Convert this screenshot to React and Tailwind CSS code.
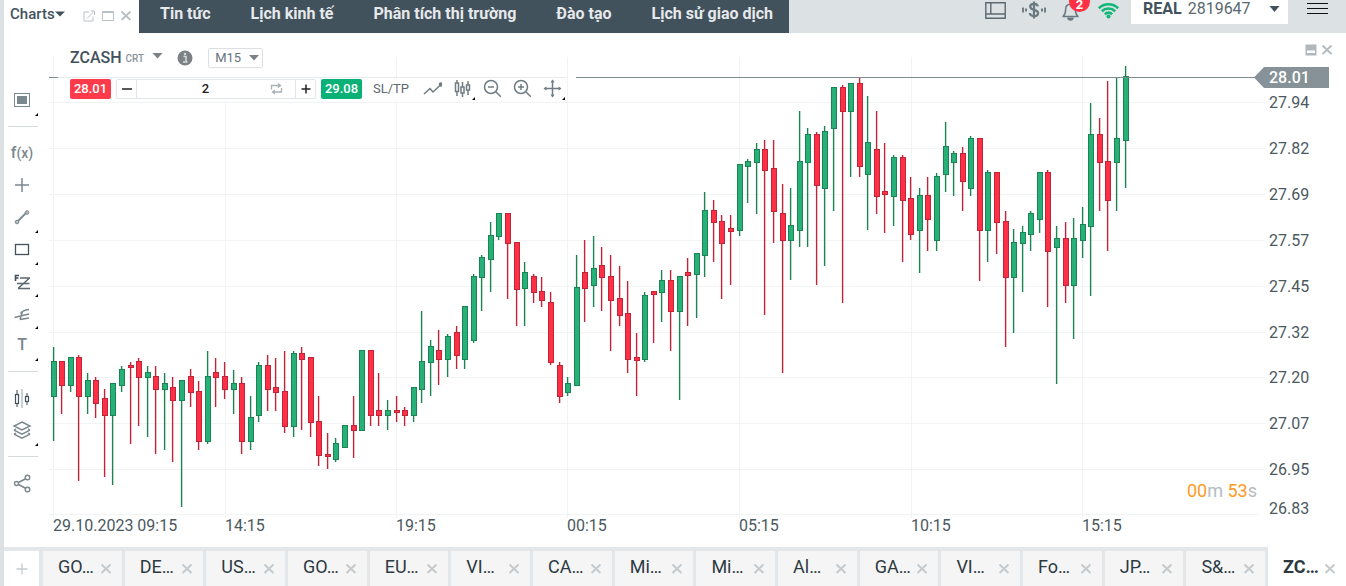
import React, { useState } from "react";

const navLinks = [
  "Tin tức",
  "Lịch kinh tế",
  "Phân tích thị trường",
  "Đào tạo",
  "Lịch sử giao dịch",
];

const symbolTabs = [
  "GO…", "DE…", "US…", "GO…", "EU…", "VI…", "CA…", "Mi…",
  "Mi…", "Al…", "GA…", "VI…", "Fo…", "JP…", "S&…",
];

const priceLabels = [
  { label: "27.94", y: 102 },
  { label: "27.82", y: 148 },
  { label: "27.69", y: 194 },
  { label: "27.57", y: 240 },
  { label: "27.45", y: 286 },
  { label: "27.32", y: 332 },
  { label: "27.20", y: 377 },
  { label: "27.07", y: 423 },
  { label: "26.95", y: 469 },
];

const timeLabels = [
  { label: "29.10.2023 09:15", x: 53 },
  { label: "14:15", x: 225 },
  { label: "19:15", x: 396 },
  { label: "00:15", x: 567 },
  { label: "05:15", x: 739 },
  { label: "10:15", x: 911 },
  { label: "15:15", x: 1082 },
];

// [up, wick top, body top, body bottom, wick bottom]
const candles = [
  [1, 347, 361, 397, 441], [0, 361, 361, 386, 414], [1, 357, 357, 386, 392],
  [0, 355, 357, 397, 481], [1, 373, 380, 397, 414], [0, 377, 380, 404, 418],
  [0, 389, 398, 416, 477], [1, 383, 383, 416, 485], [1, 366, 369, 386, 392],
  [0, 362, 365, 368, 444], [0, 358, 361, 378, 426], [1, 366, 372, 378, 437],
  [0, 366, 376, 390, 454], [1, 373, 383, 390, 450], [0, 377, 387, 401, 462],
  [1, 380, 380, 401, 507], [0, 369, 376, 393, 407], [0, 381, 391, 442, 450],
  [1, 351, 376, 442, 444], [0, 358, 372, 378, 407], [0, 362, 376, 390, 399],
  [1, 370, 383, 390, 414], [0, 377, 383, 442, 454], [1, 396, 417, 442, 450],
  [1, 362, 365, 416, 422], [0, 355, 365, 390, 411], [0, 358, 387, 393, 411],
  [0, 351, 391, 427, 433], [1, 351, 353, 427, 437], [0, 347, 353, 360, 430],
  [0, 357, 357, 423, 437], [0, 396, 421, 456, 466], [0, 433, 454, 457, 469],
  [1, 438, 443, 460, 462], [1, 425, 425, 448, 448], [0, 396, 425, 431, 458],
  [1, 350, 350, 431, 431], [0, 350, 350, 416, 426], [0, 373, 410, 416, 426],
  [1, 400, 410, 416, 430], [0, 396, 410, 413, 422], [0, 407, 410, 416, 426],
  [1, 387, 387, 416, 422], [1, 311, 361, 390, 403], [1, 340, 346, 363, 396],
  [0, 330, 350, 360, 385], [1, 334, 336, 360, 377], [0, 326, 332, 356, 369],
  [1, 306, 306, 360, 369], [1, 274, 276, 341, 343], [1, 255, 257, 278, 311],
  [1, 222, 235, 260, 292], [1, 213, 213, 237, 240], [0, 213, 213, 244, 299],
  [0, 242, 242, 290, 326], [1, 262, 272, 289, 326], [0, 274, 276, 293, 303],
  [0, 277, 291, 301, 307], [0, 292, 302, 363, 365], [0, 362, 365, 397, 403],
  [1, 377, 383, 393, 396], [1, 255, 287, 386, 386], [0, 240, 272, 289, 322],
  [1, 236, 268, 286, 307], [0, 247, 265, 278, 311], [0, 255, 276, 301, 351],
  [0, 266, 298, 316, 326], [0, 281, 313, 360, 373], [0, 333, 357, 361, 396],
  [1, 292, 295, 360, 362], [0, 291, 291, 295, 343], [1, 270, 280, 293, 322],
  [0, 270, 280, 312, 351], [1, 276, 276, 312, 400], [0, 258, 272, 276, 326],
  [1, 253, 253, 275, 318], [1, 192, 210, 256, 277], [0, 200, 210, 223, 262],
  [0, 215, 221, 244, 299], [0, 215, 228, 232, 285], [1, 164, 164, 231, 236],
  [1, 159, 161, 167, 203], [1, 143, 149, 163, 214], [0, 140, 149, 171, 315],
  [0, 140, 168, 212, 243], [0, 184, 213, 241, 373], [1, 188, 225, 241, 280],
  [1, 111, 161, 231, 247], [1, 128, 134, 163, 247], [0, 132, 134, 186, 285],
  [1, 126, 131, 189, 266], [1, 87, 87, 129, 211], [0, 85, 87, 112, 303],
  [1, 83, 83, 112, 177], [0, 78, 83, 167, 177], [1, 96, 142, 175, 230],
  [0, 111, 149, 197, 214], [0, 143, 191, 195, 233], [1, 155, 157, 197, 226],
  [0, 155, 157, 201, 262], [0, 177, 198, 235, 240], [1, 188, 195, 231, 273],
  [0, 177, 195, 220, 251], [1, 173, 176, 241, 251], [1, 122, 146, 175, 192],
  [1, 151, 153, 163, 196], [0, 147, 153, 182, 211], [1, 136, 138, 189, 196],
  [0, 138, 138, 231, 281], [1, 170, 172, 231, 262], [0, 172, 172, 223, 254],
  [0, 211, 221, 278, 347], [1, 229, 242, 278, 333], [1, 226, 232, 244, 292],
  [1, 211, 213, 235, 251], [1, 172, 172, 220, 233], [0, 170, 172, 252, 307],
  [1, 226, 238, 248, 384], [0, 222, 238, 286, 303], [1, 218, 238, 286, 339],
  [1, 207, 224, 241, 258], [1, 103, 134, 227, 296], [0, 118, 134, 163, 211],
  [0, 81, 161, 201, 251], [1, 78, 138, 163, 211], [1, 66, 76, 141, 188],
];

const App = () => {
  return (
    <div className="flex flex-col min-h-screen bg-white font-[Roboto,sans-serif] text-[#42525c]">
      <Header />
      <main className="flex flex-1 border-l-4 border-[#dce1e4]">
        <DrawingTools />
        <section className="relative flex-1 min-w-0">
          <Chart />
          <ChartToolbar />
          <div className="absolute top-[11px] right-[13px] flex items-center gap-1 text-[#b4bcc0]">
            <button aria-label="Minimize chart">
              <svg className="block" width="12" height="12" viewBox="0 0 12 12">
                <rect x="0.5" y="0.5" width="11" height="11" fill="#b0b8bd" />
                <rect x="2" y="6.5" width="8" height="2.5" fill="#fff" />
              </svg>
            </button>
            <button aria-label="Close chart">
              <CloseIcon />
            </button>
          </div>
        </section>
      </main>
      <SymbolTabs />
    </div>
  );
};

const Header = () => {
  return (
    <header className="flex h-[33px] bg-[#dce1e4] pl-1">
      <div className="flex items-center w-[135px] pl-[6px] pb-[5px] bg-white">
        <button className="flex items-center text-[15px] font-medium leading-5">
          Charts
          <svg width="10" height="6" viewBox="0 0 10 6">
            <path d="M0 0.5h10L5 5.5z" fill="currentColor" />
          </svg>
        </button>
        <div className="flex items-center gap-[6px] pl-[18px] pt-1 text-[#b9c1c5]">
          <button aria-label="Detach">
            <svg className="block" width="13" height="12" viewBox="0 0 13 12" fill="none" stroke="currentColor">
              <path d="M6 2H1v9h9V6.500M4 8.500L10.500 2M7.500 1h4v4" />
            </svg>
          </button>
          <button aria-label="Maximize">
            <svg className="block" width="12" height="12" viewBox="0 0 12 12" fill="none" stroke="currentColor">
              <path d="M0.500 1.500h11v9h-11zM0.500 2.500h11" />
            </svg>
          </button>
          <button aria-label="Close">
            <CloseIcon />
          </button>
        </div>
      </div>

      <nav className="flex items-center gap-10 pl-[21px] pr-4 pb-[5px] bg-[#42525c] text-[#e6e9eb] text-base font-bold whitespace-nowrap">
        {navLinks.map((link) => (
          <a href="#" key={link}>
            {link}
          </a>
        ))}
      </nav>

      <div className="flex flex-1 items-start justify-end">
        <div className="flex items-start gap-4 pr-3">
          <button aria-label="Layout" className="pt-[2px]">
            <svg className="block" width="21" height="17" viewBox="0 0 21 17" fill="none" stroke="#5b6970" strokeWidth="1.400">
              <path d="M0.800 0.800h19.400v15.400H0.800zM5.800 0.800v11M0.800 12h19.400" />
            </svg>
          </button>
          <button aria-label="Deposit" className="pt-[1px]">
            <svg className="block" width="24" height="18" viewBox="0 0 24 18" fill="none" stroke="#6b7980" strokeWidth="1.400">
              <path d="M12 0.500v17M15.800 5.400C15.500 3.700 14 2.900 12 2.900c-2.200 0-3.800 1-3.800 2.900 0 4.100 7.900 2.100 7.900 6.200 0 2-1.800 3.100-4.100 3.100-2.400 0-4-1.100-4.200-3.100" strokeWidth="2.200" />
              <path d="M1 6.500v5M4 7.500v3M20 7.500v3M23 6.500v5" strokeWidth="1.900" />
            </svg>
          </button>
          <button aria-label="Notifications" className="relative pt-[2px]">
            <svg className="block" width="17" height="19" viewBox="0 0 17 19" fill="none" stroke="#6b7980" strokeWidth="1.500">
              <path d="M1 14.500c2.200-1.800 2.600-3.500 2.600-6.700 0-3.300 1.700-5.600 4.900-5.600s4.900 2.300 4.900 5.600c0 3.200.4 4.900 2.600 6.700z" strokeLinejoin="round" />
              <path d="M6 16.200c.3 2.300 4.700 2.300 5 0z" fill="#6b7980" />
            </svg>
            <span className="absolute -top-[9px] left-[7px] flex items-center justify-center size-[21px] rounded-full bg-[#ff2f44] text-white text-[13px] leading-[8px] font-bold pt-[6px]">
              2
            </span>
          </button>
          <svg className="mt-[2px] ml-[3px]" width="21" height="17" viewBox="0 0 21 17" fill="none" stroke="#12b878" strokeWidth="2.600">
            <path d="M0.800 6.200c5.400-5.300 14-5.300 19.400 0M3.800 9.300c3.800-3.700 9.600-3.700 13.400 0M6.800 12.300c2.200-2 5.200-2 7.400 0" />
            <circle cx="10.500" cy="14.400" r="2" fill="#12b878" stroke="none" />
          </svg>
        </div>
        <button className="flex items-center h-6 w-[157px] pl-3 pr-2 pb-[6px] bg-white text-base leading-5">
          <span className="font-bold">REAL</span>
          <span className="pl-[6px] text-[#5a6870]">2819647</span>
          <svg className="ml-auto" width="11" height="6" viewBox="0 0 11 6">
            <path d="M0.500 0h10L5.500 6z" fill="#42525c" />
          </svg>
        </button>
        <button aria-label="Menu" className="pt-[3px] pl-[19px] pr-[18px]">
          <svg className="block" width="21" height="12" viewBox="0 0 21 12" stroke="#111">
            <path d="M0 0.500h21M0 5.500h21M0 10.500h21" />
          </svg>
        </button>
      </div>
    </header>
  );
};

const DrawingTools = () => {
  return (
    <aside className="flex flex-col w-[41px] pt-[51px] text-[#7b888e]">
      <ToolButton label="Window" hasMenu>
        <rect x="4.500" y="5.500" width="15" height="13" stroke="#7b888e" />
        <rect x="7" y="8" width="10" height="8" fill="#7b888e" stroke="none" />
      </ToolButton>
      <Separator />
      <button className="h-8 w-9 text-base leading-8 font-medium">
        f<span className="text-sm">(x)</span>
      </button>
      <ToolButton label="Crosshair">
        <path d="M5 12h14M12 5v14" strokeWidth="1.500" />
      </ToolButton>
      <ToolButton label="Trend line" hasMenu>
        <path d="M7.500 16.500l9-9" strokeWidth="1.800" />
        <circle cx="7" cy="17" r="1.800" fill="#b4bcc0" />
        <circle cx="17" cy="7.500" r="1.800" fill="#b4bcc0" />
      </ToolButton>
      <ToolButton label="Rectangle" hasMenu>
        <rect x="5.500" y="7.500" width="13" height="10" stroke="#42525c" strokeWidth="1.300" />
      </ToolButton>
      <ToolButton label="Fibonacci" hasMenu>
        <path d="M5.500 12V6.500h3.500M5.500 9h3" strokeWidth="1.600" stroke="#42525c" />
        <path d="M10 9h10M7 14.500h12.500M8 19.500h12M19.500 9L8 19.500" strokeWidth="1.500" stroke="#5b6970" />
      </ToolButton>
      <ToolButton label="Pitchfork" hasMenu>
        <path d="M4.500 16.500l14.500-3.500M10 18.500l9-1.500M10.500 12.500c2-3 4.500-3.500 8.500-4M10 18.500l2.500-8" strokeWidth="1.400" />
      </ToolButton>
      <button className="relative h-8 w-9 text-base leading-8 font-medium">
        T
        <MenuTick />
      </button>
      <Separator />
      <ToolButton label="Chart type">
        <path d="M12 3v19" stroke="#9aa4a9" />
        <path d="M7 4v17M17 7v12" strokeWidth="1.500" />
        <rect x="5.500" y="8.500" width="3" height="9" fill="#fff" stroke="#42525c" strokeWidth="1.200" />
        <rect x="15.500" y="10.500" width="3" height="5" fill="#fff" stroke="#42525c" strokeWidth="1.200" />
      </ToolButton>
      <ToolButton label="Layers" hasMenu>
        <path d="M12 4l8 4-8 4-8-4zM4 12.200l8 4 8-4M4 16.200l8 4 8-4M4 12.200l2-1M20 12.200l-2-1M4 16.200l2-1M20 16.200l-2-1" strokeWidth="1.400" />
      </ToolButton>
      <Separator />
      <ToolButton label="Share">
        <path d="M17 7L6.500 12.500 17 18" strokeWidth="1.600" />
        <circle cx="6.500" cy="12.500" r="2" fill="#fff" strokeWidth="1.400" />
        <circle cx="17.500" cy="6.500" r="2.300" fill="#fff" strokeWidth="1.400" />
        <circle cx="17.500" cy="18.500" r="2.300" fill="#fff" strokeWidth="1.400" />
      </ToolButton>
    </aside>
  );
};

const ToolButton = ({ label, hasMenu, children }) => {
  return (
    <button aria-label={label} className="relative flex items-center justify-center h-8 w-9">
      <svg width="24" height="24" viewBox="0 0 24 24" fill="none" stroke="currentColor">
        {children}
      </svg>
      {hasMenu && <MenuTick />}
    </button>
  );
};

const MenuTick = () => (
  <svg className="absolute bottom-0 right-[2px]" width="3" height="3" viewBox="0 0 3 3">
    <path d="M3 0v3H0z" fill="#000" />
  </svg>
);

const Separator = () => <hr className="ml-1 my-[10px] w-[30px] border-[#d5dadc]" />;

const CloseIcon = () => (
  <svg className="block" width="12" height="12" viewBox="0 0 12 12" fill="none" stroke="currentColor" strokeWidth="1.900">
    <path d="M1.500 1.500l9 8.500M10.500 1.500l-9 8.500" />
  </svg>
);

const ChartToolbar = () => {
  const [timeframe, setTimeframe] = useState("M15");
  const [volume, setVolume] = useState("2");

  return (
    <div className="absolute top-3 left-[13px] flex flex-col items-start">
      <div className="flex items-center h-8 pl-3 pr-3 pb-[6px] bg-white">
        <button className="flex items-center">
          <span className="text-base font-medium">ZCASH</span>
          <span className="pl-1 text-[10px] font-medium text-[#8b9599]">CRT</span>
          <svg className="ml-2 -mt-1" width="11" height="6" viewBox="0 0 11 6">
            <path d="M0.500 0h10L5.500 5.500z" fill="#7b8184" />
          </svg>
        </button>
        <button aria-label="Info" className="ml-[14px]">
          <svg className="block" width="16" height="16" viewBox="0 0 16 16">
            <circle cx="8" cy="8" r="7.500" fill="#7b8184" />
            <path d="M6.500 6.500h2.500v5M6 12h4.500" stroke="#d8dbdc" strokeWidth="1.500" fill="none" />
            <circle cx="8" cy="4" r="1.200" fill="#d8dbdc" />
          </svg>
        </button>
        <div className="relative ml-[15px]">
          <select
            aria-label="Timeframe"
            value={timeframe}
            onChange={(e) => setTimeframe(e.target.value)}
            className="block appearance-none h-5 w-[55px] pl-[6px] border border-[#dce0e2] rounded-xs bg-white text-[13px] leading-4 text-[#67747b]"
          >
            <option>M1</option>
            <option>M5</option>
            <option>M15</option>
            <option>H1</option>
          </select>
          <svg className="absolute right-1 top-[7px] pointer-events-none" width="10" height="6" viewBox="0 0 10 6">
            <path d="M0 0h10L5 5.500z" fill="#7b8184" />
          </svg>
        </div>
      </div>

      <div className="flex items-center h-[23px] pl-3 border-t border-[#e6eaec] bg-white">
        <button className="h-5 w-[41px] rounded-xs bg-[#ff3b4b] text-white text-[13px] font-medium">
          28.01
        </button>
        <div className="flex items-center h-5 ml-[5px] mr-[5px] border border-[#e3e6e8] rounded-xs text-[#222]">
          <button aria-label="Decrease" className="flex items-center justify-center w-[19px]">
            <svg width="10" height="10" viewBox="0 0 10 10" stroke="currentColor" strokeWidth="1.500">
              <path d="M0 5h10" />
            </svg>
          </button>
          <input
            aria-label="Volume"
            value={volume}
            onChange={(e) => setVolume(e.target.value)}
            className="h-[18px] w-[138px] border-l border-[#e3e6e8] text-center text-[13px] font-medium"
          />
          <button aria-label="Switch volume unit" className="w-[21px]">
            <svg className="block -ml-1" width="13" height="12" viewBox="0 0 13 12" fill="none" stroke="#a9b1b5" strokeWidth="1.300">
              <path d="M1.500 6.500v-4h9M8 0.500l2.500 2L8 4.500M11.500 5v4h-9M5 7L2.500 9 5 11" />
            </svg>
          </button>
          <button
            aria-label="Increase"
            className="flex items-center justify-center h-[18px] w-5 border-l border-[#e3e6e8]"
          >
            <svg width="10" height="10" viewBox="0 0 10 10" stroke="currentColor" strokeWidth="1.500">
              <path d="M0.500 5h9M5 0.500v9" />
            </svg>
          </button>
        </div>
        <button className="h-5 w-[41px] rounded-xs bg-[#09b177] text-white text-[13px] font-medium">
          29.08
        </button>
        <button className="ml-[11px] mr-2 text-[13px] text-[#5b6970]">SL/TP</button>
        <div className="flex items-center text-[#6f7c83]">
          <BarButton label="Line chart">
            <path d="M1 15l6-5.500 3 3.500 8-7.500" />
            <circle cx="18" cy="5.500" r="1.500" fill="currentColor" />
          </BarButton>
          <BarButton label="Candles" hasMenu>
            <path d="M4 1v16M9.500 3v15M15 2v14" />
            <rect x="2.500" y="4" width="3" height="8.500" fill="#fff" />
            <rect x="8" y="8" width="3" height="6" fill="#fff" />
            <rect x="13.500" y="6" width="3" height="5" fill="#fff" />
          </BarButton>
          <BarButton label="Zoom out">
            <circle cx="8" cy="8" r="6.500" />
            <path d="M5 8h6M12.800 12.800l5 5" />
          </BarButton>
          <BarButton label="Zoom in">
            <circle cx="8" cy="8" r="6.500" />
            <path d="M5 8h6M8 5v6M12.800 12.800l5 5" />
          </BarButton>
          <BarButton label="Move" hasMenu>
            <path d="M1.500 9.500h16M9.500 1.500v16" />
            <path d="M0.500 9.500l3-2v4zM18.500 9.500l-3-2v4zM9.500 0.500l-2 3h4zM9.500 18.500l-2-3h4z" fill="currentColor" stroke="none" />
          </BarButton>
        </div>
      </div>
    </div>
  );
};

const BarButton = ({ label, hasMenu, children }) => {
  return (
    <button aria-label={label} className="relative flex items-center justify-center h-[22px] w-[30px] pb-[2px]">
      <svg width="19" height="19" viewBox="0 0 19 19" fill="none" stroke="currentColor" strokeWidth="1.500">
        {children}
      </svg>
      {hasMenu && <MenuTick />}
    </button>
  );
};

const Chart = () => {
  return (
    <svg className="block w-full h-auto" viewBox="45 33 1301 514" fontFamily="Roboto, sans-serif">
      <g stroke="#f1f4f5" shapeRendering="crispEdges">
        {priceLabels.map(({ y }) => (
          <line key={y} x1="49" x2="1265" y1={y + 0.5} y2={y + 0.5} />
        ))}
        <line x1="49" x2="1258" y1="514.5" y2="514.5" />
        {timeLabels.map(({ x }) => (
          <line key={x} x1={x + 0.5} x2={x + 0.5} y1="57" y2="518" />
        ))}
      </g>

      {candles.map(([up, high, top, bottom, low], i) => {
        const x = Math.floor(50.9 + i * 8.578) + (i === 0 ? 1 : 0);
        return (
          <g key={i} fill={up ? "#27b078" : "#ff2f45"} stroke={up ? "#1b8452" : "#bf2438"}>
            <line x1={x + 2.6} x2={x + 2.6} y1={high} y2={low} strokeWidth="1.400" />
            <rect x={x + 0.5} y={top + 0.5} width="5" height={Math.max(bottom - top - 1, 2)} />
          </g>
        );
      })}

      <path d="M49 77.500h9M576 77.500h682" stroke="#7f8c92" />
      <path d="M1254 77.500l10-10.500h65v21h-65z" fill="#869297" />
      <text x="1269" y="83" fontSize="16" fontWeight="500" fill="#fff">
        28.01
      </text>

      <g fontSize="16" fill="#4b5960">
        {priceLabels.map(({ label, y }) => (
          <text key={label} x="1269" y={y + 6}>
            {label}
          </text>
        ))}
        <text x="1269" y="514">26.83</text>
        {timeLabels.map(({ label, x }) => (
          <text key={label} x={x} y="531">
            {label}
          </text>
        ))}
      </g>

      <text x="1187" y="497" fontSize="18" fill="#b4bcc0">
        <tspan fill="#ff9a1f">00</tspan>m <tspan fill="#ff9a1f">53</tspan>s
      </text>
    </svg>
  );
};

const SymbolTabs = () => {
  return (
    <footer className="flex h-[39px] border-l-4 border-[#dce1e4] bg-[#e3e7e9] text-lg text-[#2e3a42]">
      <button aria-label="Add symbol" className="flex items-center justify-center w-[35px] mt-1 bg-white">
        <svg width="12" height="12" viewBox="0 0 12 12" stroke="#c5cbce" strokeWidth="1.300">
          <path d="M0.500 6h11M6 0.500v11" />
        </svg>
      </button>
      <div className="flex flex-1 gap-[3px] pt-1 pl-1 pr-[3px] min-w-0">
        {symbolTabs.map((tab, i) => (
          <Tab key={i} name={tab} />
        ))}
      </div>
      <div className="flex w-[78px] pt-1 bg-white font-bold">
        <Tab name="ZC…" active />
      </div>
    </footer>
  );
};

const Tab = ({ name, active }) => {
  return (
    <div
      className={`flex flex-1 items-center justify-between pl-[15px] pr-[10px] min-w-0 ${
        active ? "bg-white" : "bg-[#f5f5f5]"
      }`}
    >
      <a href="#" className="pb-1">
        {name}
      </a>
      <button aria-label={`Close ${name}`} className="text-[#c3c9cc]">
        <CloseIcon />
      </button>
    </div>
  );
};

export default App;
